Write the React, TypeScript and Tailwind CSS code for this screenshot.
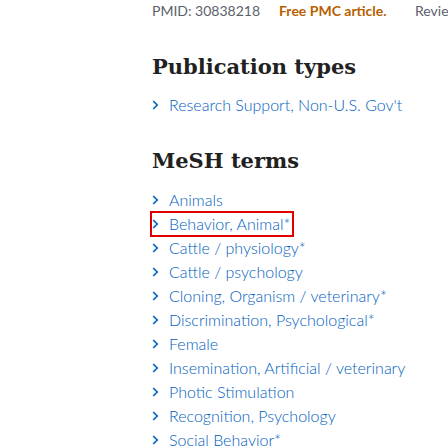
const meshTerms = [
  'Animals',
  'Behavior, Animal*',
  'Cattle / physiology*',
  'Cattle / psychology',
  'Cloning, Organism / veterinary*',
  'Discrimination, Psychological*',
  'Female',
  'Insemination, Artificial / veterinary',
  'Photic Stimulation',
  'Recognition, Psychology',
  'Social Behavior*',
];

const Chevron = () => (
  <svg width="7" height="12" viewBox="0 0 7 12" className="shrink-0">
    <path d="M1.2 2 L5.2 6 L1.2 10" fill="none" stroke="#0068c0" strokeWidth="1.7" />
  </svg>
);

const Term = ({ label, focused }: { label: string; focused?: boolean }) => (
  <li>
    <a
      href="#"
      className={`inline-flex items-center gap-[10px] h-6 text-[16px] font-light text-[#0060c0] ${
        focused ? 'outline-2 outline-[#e00000] -outline-offset-1 -ml-[1px] pl-[1px] pr-[3px]' : ''
      }`}
    >
      <Chevron />
      <span>{label}</span>
    </a>
  </li>
);

export default function App() {
  return (
    <div className="w-[448px] h-[448px] overflow-hidden bg-white pl-[152px] font-['Lato',sans-serif]">
      <div className="flex text-[14px] whitespace-nowrap pt-[2px] leading-[18px]">
        <span className="w-[127px] shrink-0 text-[#5b616b]">PMID: 30838218</span>
        <span className="w-[136px] shrink-0 text-[#b85f00] font-bold">Free PMC article.</span>
        <span className="text-[#5b616b]">Review.</span>
      </div>

      <h2 className="mt-[33px] text-[21px] font-bold text-[#212121] font-['DejaVu_Serif',serif] leading-7">
        Publication types
      </h2>
      <ul className="mt-[12px]">
        <Term label="Research Support, Non-U.S. Gov't" />
      </ul>

      <h2 className="mt-[30px] text-[21px] font-bold text-[#212121] font-['DejaVu_Serif',serif] leading-7">
        MeSH terms
      </h2>
      <ul className="mt-[13px]">
        {meshTerms.map((t) => (
          <Term key={t} label={t} focused={t === 'Behavior, Animal*'} />
        ))}
      </ul>
    </div>
  );
}
